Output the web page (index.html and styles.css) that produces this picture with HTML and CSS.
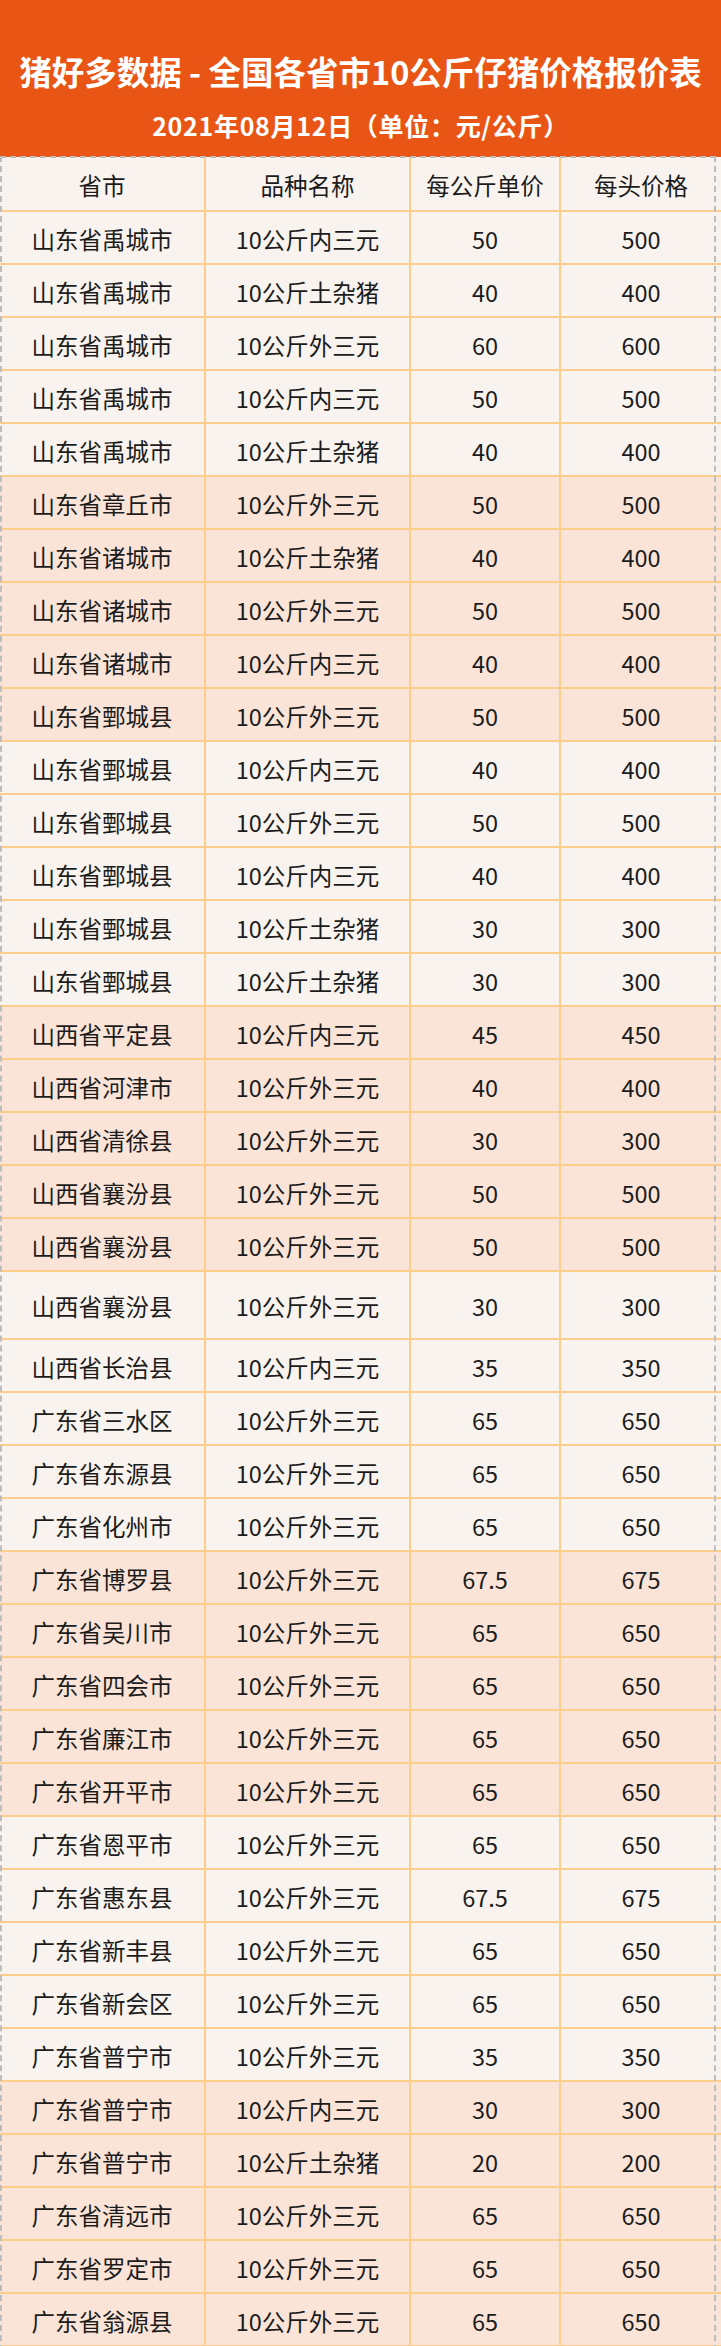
FILE: index.html
```html
<!DOCTYPE html>
<html lang="zh-CN">
<head>
<meta charset="utf-8">
<title>猪好多数据 - 全国各省市10公斤仔猪价格报价表</title>
<link rel="stylesheet" href="styles.css">
</head>
<body>
<div class="page">
  <header class="banner">
    <h1 class="title">猪好多数据 - 全国各省市10公斤仔猪价格报价表</h1>
    <p class="subtitle">2021年08月12日（单位：元/公斤）</p>
  </header>
  <div class="table-wrap">
    <table class="prices">
      <colgroup>
        <col class="c-city"><col class="c-kind"><col class="c-unit"><col class="c-head">
      </colgroup>
      <thead>
        <tr><th>省市</th><th>品种名称</th><th>每公斤单价</th><th>每头价格</th></tr>
      </thead>
      <tbody>
        <tr><td>山东省禹城市</td><td>10公斤内三元</td><td>50</td><td>500</td></tr>
        <tr><td>山东省禹城市</td><td>10公斤土杂猪</td><td>40</td><td>400</td></tr>
        <tr><td>山东省禹城市</td><td>10公斤外三元</td><td>60</td><td>600</td></tr>
        <tr><td>山东省禹城市</td><td>10公斤内三元</td><td>50</td><td>500</td></tr>
        <tr><td>山东省禹城市</td><td>10公斤土杂猪</td><td>40</td><td>400</td></tr>
        <tr class="tint"><td>山东省章丘市</td><td>10公斤外三元</td><td>50</td><td>500</td></tr>
        <tr class="tint"><td>山东省诸城市</td><td>10公斤土杂猪</td><td>40</td><td>400</td></tr>
        <tr class="tint"><td>山东省诸城市</td><td>10公斤外三元</td><td>50</td><td>500</td></tr>
        <tr class="tint"><td>山东省诸城市</td><td>10公斤内三元</td><td>40</td><td>400</td></tr>
        <tr class="tint"><td>山东省鄄城县</td><td>10公斤外三元</td><td>50</td><td>500</td></tr>
        <tr><td>山东省鄄城县</td><td>10公斤内三元</td><td>40</td><td>400</td></tr>
        <tr><td>山东省鄄城县</td><td>10公斤外三元</td><td>50</td><td>500</td></tr>
        <tr><td>山东省鄄城县</td><td>10公斤内三元</td><td>40</td><td>400</td></tr>
        <tr><td>山东省鄄城县</td><td>10公斤土杂猪</td><td>30</td><td>300</td></tr>
        <tr><td>山东省鄄城县</td><td>10公斤土杂猪</td><td>30</td><td>300</td></tr>
        <tr class="tint"><td>山西省平定县</td><td>10公斤内三元</td><td>45</td><td>450</td></tr>
        <tr class="tint"><td>山西省河津市</td><td>10公斤外三元</td><td>40</td><td>400</td></tr>
        <tr class="tint"><td>山西省清徐县</td><td>10公斤外三元</td><td>30</td><td>300</td></tr>
        <tr class="tint"><td>山西省襄汾县</td><td>10公斤外三元</td><td>50</td><td>500</td></tr>
        <tr class="tint"><td>山西省襄汾县</td><td>10公斤外三元</td><td>50</td><td>500</td></tr>
        <tr class="tall"><td>山西省襄汾县</td><td>10公斤外三元</td><td>30</td><td>300</td></tr>
        <tr><td>山西省长治县</td><td>10公斤内三元</td><td>35</td><td>350</td></tr>
        <tr><td>广东省三水区</td><td>10公斤外三元</td><td>65</td><td>650</td></tr>
        <tr><td>广东省东源县</td><td>10公斤外三元</td><td>65</td><td>650</td></tr>
        <tr><td>广东省化州市</td><td>10公斤外三元</td><td>65</td><td>650</td></tr>
        <tr class="tint"><td>广东省博罗县</td><td>10公斤外三元</td><td>67.5</td><td>675</td></tr>
        <tr class="tint"><td>广东省吴川市</td><td>10公斤外三元</td><td>65</td><td>650</td></tr>
        <tr class="tint"><td>广东省四会市</td><td>10公斤外三元</td><td>65</td><td>650</td></tr>
        <tr class="tint"><td>广东省廉江市</td><td>10公斤外三元</td><td>65</td><td>650</td></tr>
        <tr class="tint"><td>广东省开平市</td><td>10公斤外三元</td><td>65</td><td>650</td></tr>
        <tr><td>广东省恩平市</td><td>10公斤外三元</td><td>65</td><td>650</td></tr>
        <tr><td>广东省惠东县</td><td>10公斤外三元</td><td>67.5</td><td>675</td></tr>
        <tr><td>广东省新丰县</td><td>10公斤外三元</td><td>65</td><td>650</td></tr>
        <tr><td>广东省新会区</td><td>10公斤外三元</td><td>65</td><td>650</td></tr>
        <tr><td>广东省普宁市</td><td>10公斤外三元</td><td>35</td><td>350</td></tr>
        <tr class="tint"><td>广东省普宁市</td><td>10公斤内三元</td><td>30</td><td>300</td></tr>
        <tr class="tint"><td>广东省普宁市</td><td>10公斤土杂猪</td><td>20</td><td>200</td></tr>
        <tr class="tint"><td>广东省清远市</td><td>10公斤外三元</td><td>65</td><td>650</td></tr>
        <tr class="tint"><td>广东省罗定市</td><td>10公斤外三元</td><td>65</td><td>650</td></tr>
        <tr class="tint"><td>广东省翁源县</td><td>10公斤外三元</td><td>65</td><td>650</td></tr>
      </tbody>
    </table>
    <div class="frame"></div>
  </div>
</div>
</body>
</html>
```

FILE: styles.css
```css
html, body {
  margin: 0;
  padding: 0;
  background: #ffffff;
}

.page {
  width: 721px;
  font-family: "Noto Sans CJK SC", "Noto Sans", sans-serif;
  color: #1c1c1c;
}

.banner {
  height: 157px;
  box-sizing: border-box;
  background: #e95514;
  color: #ffffff;
  display: flex;
  flex-direction: column;
  align-items: center;
  padding-top: 49px;
}

.title {
  margin: 0;
  font-size: 32.5px;
  line-height: 44px;
  font-weight: 700;
  white-space: nowrap;
}

.subtitle {
  margin: 17px 0 0;
  font-size: 25px;
  line-height: 30px;
  font-weight: 700;
  letter-spacing: 0.7px;
  white-space: nowrap;
}

.table-wrap {
  position: relative;
}

.prices {
  width: 721px;
  table-layout: fixed;
  border-collapse: collapse;
  background: #f8f3ef;
}

.c-city { width: 205px; }
.c-kind { width: 205px; }
.c-unit { width: 150px; }
.c-head { width: 161px; }

.prices th,
.prices td {
  padding: 3px 0 0;
  text-align: center;
  font-size: 23.5px;
  font-weight: 400;
  line-height: 48px;
  white-space: nowrap;
  border-bottom: 2px solid #fdcd8b;
  border-right: 2px solid #fdcd8b;
}

.prices th {
  line-height: 50px;
}

.prices th:last-child,
.prices td:last-child {
  border-right: none;
}

.prices tr.tint td {
  background: #fae4d8;
}

.prices tr.tall td {
  line-height: 63px;
}

.frame {
  position: absolute;
  left: 0;
  top: -1px;
  right: 5px;
  bottom: -4px;
  border: 2px dashed #bdbdbd;
  border-bottom: none;
  pointer-events: none;
}
```
